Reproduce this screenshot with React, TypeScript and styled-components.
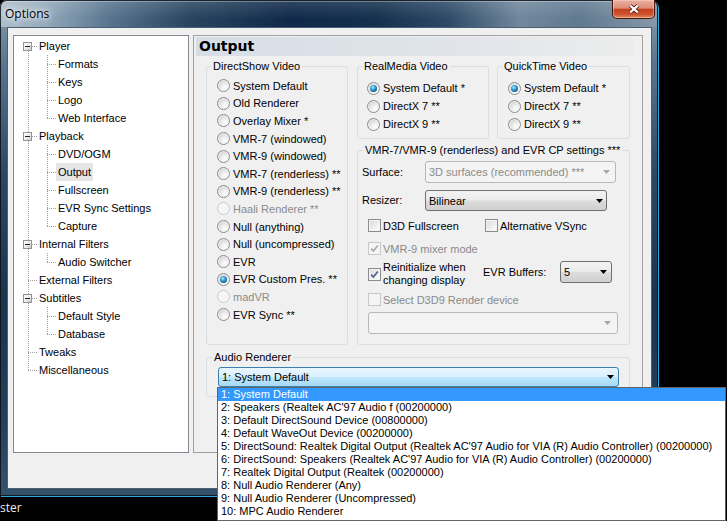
import React from 'react'
import type { FC, ReactNode } from 'react'
import styled, { createGlobalStyle, css } from 'styled-components'

const UI_FONT = `'Liberation Sans', Arial, sans-serif`

const GlobalStyle = createGlobalStyle`
  * { box-sizing: border-box; }
  html, body { margin: 0; padding: 0; background: #000; }
  body {
    width: 727px;
    height: 521px;
    overflow: hidden;
    font-family: ${UI_FONT};
    font-size: 11px;
    color: #000;
  }
  ul { list-style: none; margin: 0; padding: 0; }
`

/* ---------- desktop + window frame ---------- */

const Screen = styled.div`
  display: flex;
  flex-direction: column;
  width: 727px;
  height: 521px;
  overflow: hidden;
  background: #000;
`

const Window = styled.div`
  display: flex;
  flex-direction: column;
  flex: none;
  width: 658px;
  height: 496px;
  padding: 0 6px 7px 7px;
  border-radius: 7px 7px 0 0;
  background: linear-gradient(
    180deg,
    #8ea2b3 0%,
    #5c778f 12%,
    #2c4861 35%,
    #1b344d 60%,
    #243f58 85%,
    #35526b 100%
  );
  box-shadow: 1px 1px 0 #2ea7da, inset 0 0 0 1px rgba(8, 16, 26, 0.85);
`

const TitleBar = styled.div`
  display: flex;
  justify-content: space-between;
  align-items: flex-start;
  flex: none;
  height: 27px;
  margin: 0 -6px 0 -7px;
  padding: 0 3px 0 5px;
  border-radius: 7px 7px 0 0;
  background:
    linear-gradient(180deg, rgba(255, 255, 255, 0.14), rgba(255, 255, 255, 0) 70%),
    linear-gradient(
      90deg,
      #aebfcc 0%,
      #93a9ba 7%,
      #56728d 17%,
      #27455f 29%,
      #10294a 44%,
      #13304d 57%,
      #2c4a67 68%,
      #71879d 79%,
      #60798f 88%,
      #8799aa 100%
    );
  box-shadow: inset 0 1px 0 rgba(8, 16, 26, 0.85), inset 1px 0 0 rgba(8, 16, 26, 0.85),
    inset -1px 0 0 rgba(8, 16, 26, 0.85), inset 0 2px 0 rgba(255, 255, 255, 0.3);
`

const Title = styled.span`
  padding-top: 6px;
  font-family: 'Open Sans', 'Noto Sans', sans-serif;
  font-size: 12px;
  line-height: 16px;
  color: #000;
  text-shadow: 0 0 5px #fff, 0 0 9px rgba(255, 255, 255, 0.9), 0 0 14px rgba(255, 255, 255, 0.6);
`

const CloseButton = styled.div`
  display: flex;
  align-items: center;
  justify-content: center;
  width: 43px;
  height: 19px;
  border: 1px solid rgba(52, 12, 4, 0.9);
  border-top: 0;
  border-radius: 0 0 5px 5px;
  background: linear-gradient(180deg, #eab0a2 0%, #dd8d78 45%, #c5401f 52%, #cd5430 80%, #e28c63 100%);
  box-shadow: inset 0 0 0 1px rgba(255, 220, 200, 0.45);
`

const Client = styled.div`
  flex: 1;
  display: flex;
  align-items: flex-start;
  gap: 4px;
  padding: 7px 8px 0 5px;
  background: #f0f0f0;
  border: 1px solid #4c5f72;
`

const Taskbar = styled.div`
  flex: none;
  padding-top: 5px;
  font-family: 'Open Sans', 'Noto Sans', sans-serif;
  font-size: 12px;
  line-height: 14px;
  color: #ececec;
`

/* ---------- tree ---------- */

const TreeBox = styled.div`
  flex: none;
  width: 176px;
  height: 418px;
  padding-top: 1px;
  background: #fff;
  border: 1px solid #828790;
`

const Branch = styled.ul<{ $level: number }>`
  position: relative;
  &::before {
    content: '';
    position: absolute;
    left: ${(p) => 14 + p.$level * 19}px;
    top: ${(p) => (p.$level === 0 ? 9 : 0)}px;
    bottom: 9px;
    border-left: 1px dotted #a0a0a0;
  }
`

const TreeRow = styled.div<{ $level: number }>`
  position: relative;
  height: 18px;
  padding-left: ${(p) => 23 + p.$level * 19}px;
  &::before {
    content: '';
    position: absolute;
    left: ${(p) => 14 + p.$level * 19}px;
    top: 9px;
    width: 9px;
    border-top: 1px dotted #a0a0a0;
  }
`

const Expander = styled.span<{ $level: number }>`
  position: absolute;
  z-index: 1;
  left: ${(p) => 9 + p.$level * 19}px;
  top: 5px;
  width: 9px;
  height: 9px;
  border: 1px solid #939393;
  background: linear-gradient(135deg, #ffffff 0%, #ececec 55%, #c9c9c9 100%);
  &::after {
    content: '';
    position: absolute;
    left: 1px;
    top: 3px;
    width: 5px;
    height: 1px;
    background: #222;
  }
`

const TreeLabel = styled.span<{ $selected?: boolean }>`
  display: inline-block;
  position: relative;
  padding: 0 2px;
  line-height: 18px;
  white-space: nowrap;
  background: ${(p) => (p.$selected ? '#e6e6e6' : 'transparent')};
`

type TreeNode = { label: string; selected?: boolean; children?: TreeNode[] }

const TREE: TreeNode[] = [
  {
    label: 'Player',
    children: [{ label: 'Formats' }, { label: 'Keys' }, { label: 'Logo' }, { label: 'Web Interface' }],
  },
  {
    label: 'Playback',
    children: [
      { label: 'DVD/OGM' },
      { label: 'Output', selected: true },
      { label: 'Fullscreen' },
      { label: 'EVR Sync Settings' },
      { label: 'Capture' },
    ],
  },
  { label: 'Internal Filters', children: [{ label: 'Audio Switcher' }] },
  { label: 'External Filters' },
  { label: 'Subtitles', children: [{ label: 'Default Style' }, { label: 'Database' }] },
  { label: 'Tweaks' },
  { label: 'Miscellaneous' },
]

const TreeBranch: FC<{ nodes: TreeNode[]; level: number }> = ({ nodes, level }) => (
  <Branch $level={level}>
    {nodes.map((n) => (
      <li key={n.label}>
        <TreeRow $level={level}>
          {n.children && <Expander $level={level} />}
          <TreeLabel $selected={n.selected}>{n.label}</TreeLabel>
        </TreeRow>
        {n.children && <TreeBranch nodes={n.children} level={level + 1} />}
      </li>
    ))}
  </Branch>
)

/* ---------- page panel ---------- */

const Panel = styled.div`
  flex: none;
  width: 450px;
  height: 418px;
  border: 1px solid #a0a0a0;
  background: #f0f0f0;
`

const PageHeader = styled.h2`
  height: 19px;
  margin: 1px 8px 0 2px;
  padding-left: 3px;
  font-family: 'DejaVu Sans', Verdana, sans-serif;
  font-size: 14px;
  font-weight: bold;
  line-height: 19px;
  background: linear-gradient(90deg, #d6dde6 0%, #e1e5ea 60%, #ececec 100%);
`

const PageBody = styled.div`
  display: grid;
  grid-template-columns: 142px 273px;
  column-gap: 9px;
  row-gap: 6px;
  margin: 4px 0 0 12px;
`

const RightColumn = styled.div`
  display: flex;
  flex-direction: column;
  gap: 5px;
`

const GroupRow = styled.div`
  display: flex;
  gap: 8px;
`

const Group = styled.fieldset<{ $w: number; $h: number; $wide?: boolean }>`
  width: ${(p) => p.$w}px;
  height: ${(p) => p.$h}px;
  min-width: 0;
  margin: 0;
  padding: 0;
  border: 1px solid #d5dfe5;
  border-radius: 3px;
  ${(p) =>
    p.$wide &&
    css`
      grid-column: 1 / -1;
    `}
`

const Legend = styled.legend<{ $indent?: number }>`
  margin-left: ${(p) => p.$indent ?? 4}px;
  padding: 0 2px;
  font-size: 11px;
  line-height: 13px;
`

const OptionList = styled.ul<{ $pad: string }>`
  padding: ${(p) => p.$pad};
`

const Option = styled.li<{ $h: number; $disabled?: boolean; $w?: number }>`
  display: flex;
  align-items: center;
  gap: 3px;
  height: ${(p) => p.$h}px;
  white-space: nowrap;
  color: ${(p) => (p.$disabled ? '#8a8a8a' : '#000')};
  ${(p) =>
    p.$w &&
    css`
      width: ${p.$w}px;
    `}
`

const RadioDot = styled.span<{ $checked?: boolean; $disabled?: boolean }>`
  position: relative;
  flex: none;
  width: 13px;
  height: 13px;
  border-radius: 50%;
  border: 1px solid ${(p) => (p.$disabled ? '#c8c8c8' : '#8b8c8c')};
  background: ${(p) =>
    p.$disabled
      ? '#f4f4f4'
      : 'radial-gradient(circle at 65% 70%, #ffffff 0%, #eeeeee 35%, #d2d2d2 75%, #bebebe 100%)'};
  box-shadow: inset 0 0 0 1px rgba(255, 255, 255, 0.6);
  &::after {
    content: '';
    display: ${(p) => (p.$checked ? 'block' : 'none')};
    position: absolute;
    left: 2px;
    top: 2px;
    width: 7px;
    height: 7px;
    border-radius: 50%;
    background: radial-gradient(circle at 40% 35%, #b2e8fb 0%, #3ea3d8 35%, #10619a 70%, #0a3c66 100%);
  }
`

const CheckBox = styled.span<{ $disabled?: boolean }>`
  display: flex;
  align-items: center;
  justify-content: center;
  flex: none;
  width: 13px;
  height: 13px;
  border: 1px solid ${(p) => (p.$disabled ? '#c8c8c8' : '#8b8c8c')};
  background: ${(p) =>
    p.$disabled ? '#f4f4f4' : 'linear-gradient(135deg, #d8d9db 0%, #eeeeef 55%, #ffffff 100%)'};
  box-shadow: inset 0 0 0 1px ${(p) => (p.$disabled ? '#f4f4f4' : '#f4f4f4')};
`

const TwoLine = styled.span`
  line-height: 13px;
  white-space: nowrap;
`

const VmrBody = styled.div`
  display: flex;
  flex-direction: column;
  padding: 4px 0 0 4px;
`

const FieldRow = styled.div<{ $mt?: number; $ml?: number; $align?: string }>`
  display: flex;
  align-items: ${(p) => p.$align ?? 'center'};
  margin-top: ${(p) => p.$mt ?? 0}px;
  margin-left: ${(p) => p.$ml ?? 0}px;
`

const FieldLabel = styled.span<{ $w: number; $lh?: number }>`
  flex: none;
  width: ${(p) => p.$w}px;
  line-height: ${(p) => p.$lh ?? 13}px;
  white-space: nowrap;
`

type ComboVariant = 'normal' | 'disabled' | 'focused'

const comboLook = {
  normal: css`
    border: 1px solid #707070;
    background: linear-gradient(180deg, #f3f3f3 0%, #ebebeb 48%, #dddddd 52%, #cfcfcf 100%);
    color: #000;
  `,
  disabled: css`
    border: 1px solid #b5b9bc;
    background: #f4f4f4;
    color: #8a8a8a;
  `,
  focused: css`
    border: 1px solid #3c7fb1;
    background: linear-gradient(180deg, #eaf6fd 0%, #d9f0fc 48%, #bee6fd 52%, #a7d9f5 100%);
    color: #000;
  `,
}

const Combo = styled.div<{ $variant: ComboVariant; $w: number; $h: number; $pr?: number }>`
  position: relative;
  flex: none;
  display: flex;
  align-items: center;
  justify-content: space-between;
  width: ${(p) => p.$w}px;
  height: ${(p) => p.$h}px;
  padding: 0 ${(p) => p.$pr ?? 4}px 0 3px;
  border-radius: 3px;
  white-space: nowrap;
  ${(p) => comboLook[p.$variant]}
`

const AudioBody = styled.div`
  padding: 3px 0 0 11px;
`

const DropList = styled.ul`
  position: absolute;
  z-index: 20;
  top: calc(100% + 1px);
  left: -2px;
  width: 509px;
  height: 134px;
  background: #fff;
  border: 1px solid #646464;
`

const DropItem = styled.li<{ $active?: boolean }>`
  height: 13px;
  padding-left: 3px;
  line-height: 13px;
  white-space: nowrap;
  color: ${(p) => (p.$active ? '#fff' : '#000')};
  background: ${(p) => (p.$active ? '#3399ff' : 'transparent')};
`

/* ---------- small drawings ---------- */

const Arrow: FC<{ color?: string }> = ({ color = '#000' }) => (
  <svg width="7" height="4" viewBox="0 0 7 4">
    <path d="M0 0h7L3.5 4z" fill={color} />
  </svg>
)

const CheckMark: FC<{ color?: string }> = ({ color = '#4a5f8a' }) => (
  <svg width="9" height="9" viewBox="0 0 9 9">
    <path d="M1.2 4.6 L3.4 7 L7.8 1.6" fill="none" stroke={color} strokeWidth="1.6" />
  </svg>
)

const CloseGlyph: FC = () => (
  <svg width="12" height="10" viewBox="0 0 12 10">
    <path d="M2.2 1.6 L9.8 8.4 M9.8 1.6 L2.2 8.4" stroke="#4a1508" strokeWidth="3.8" />
    <path d="M2.2 1.6 L9.8 8.4 M9.8 1.6 L2.2 8.4" stroke="#fff" strokeWidth="2.1" />
  </svg>
)

/* ---------- data ---------- */

type RadioItem = { label: string; checked?: boolean; disabled?: boolean }

const DIRECTSHOW: RadioItem[] = [
  { label: 'System Default' },
  { label: 'Old Renderer' },
  { label: 'Overlay Mixer *' },
  { label: 'VMR-7 (windowed)' },
  { label: 'VMR-9 (windowed)' },
  { label: 'VMR-7 (renderless) **' },
  { label: 'VMR-9 (renderless) **' },
  { label: 'Haali Renderer **', disabled: true },
  { label: 'Null (anything)' },
  { label: 'Null (uncompressed)' },
  { label: 'EVR' },
  { label: 'EVR Custom Pres. **', checked: true },
  { label: 'madVR', disabled: true },
  { label: 'EVR Sync **' },
]

const SMALL_GROUP: RadioItem[] = [
  { label: 'System Default *', checked: true },
  { label: 'DirectX 7 **' },
  { label: 'DirectX 9 **' },
]

const AUDIO_DEVICES = [
  '1: System Default',
  "2: Speakers (Realtek AC'97 Audio f (00200000)",
  '3: Default DirectSound Device (00800000)',
  '4: Default WaveOut Device (00200000)',
  "5: DirectSound: Realtek Digital Output (Realtek AC'97 Audio for VIA (R) Audio Controller) (00200000)",
  "6: DirectSound: Speakers (Realtek AC'97 Audio for VIA (R) Audio Controller) (00200000)",
  '7: Realtek Digital Output (Realtek (00200000)',
  '8: Null Audio Renderer (Any)',
  '9: Null Audio Renderer (Uncompressed)',
  '10: MPC Audio Renderer',
]

const RadioGroup: FC<{ items: RadioItem[]; pad: string; rowH: number }> = ({ items, pad, rowH }) => (
  <OptionList $pad={pad}>
    {items.map((it) => (
      <Option key={it.label} $h={rowH} $disabled={it.disabled}>
        <RadioDot $checked={it.checked} $disabled={it.disabled} />
        {it.label}
      </Option>
    ))}
  </OptionList>
)

const Check: FC<{ checked?: boolean; disabled?: boolean; w?: number; children: ReactNode }> = ({
  checked,
  disabled,
  w,
  children,
}) => (
  <Option as="div" $h={14} $w={w} $disabled={disabled} style={{ height: 'auto', gap: 2 }}>
    <CheckBox $disabled={disabled}>{checked && <CheckMark color={disabled ? '#a8a8a8' : undefined} />}</CheckBox>
    {children}
  </Option>
)

/* ---------- app ---------- */

const App: FC = () => (
  <Screen>
    <GlobalStyle />
    <Window>
      <TitleBar>
        <Title>Options</Title>
        <CloseButton>
          <CloseGlyph />
        </CloseButton>
      </TitleBar>
      <Client>
        <TreeBox>
          <TreeBranch nodes={TREE} level={0} />
        </TreeBox>
        <Panel>
          <PageHeader>Output</PageHeader>
          <PageBody>
            <Group $w={142} $h={285}>
              <Legend>DirectShow Video</Legend>
              <RadioGroup items={DIRECTSHOW} pad="4px 0 0 10px" rowH={17.6} />
            </Group>
            <RightColumn>
              <GroupRow>
                <Group $w={132} $h={79}>
                  <Legend>RealMedia Video</Legend>
                  <RadioGroup items={SMALL_GROUP} pad="6px 0 0 9px" rowH={18} />
                </Group>
                <Group $w={133} $h={79}>
                  <Legend>QuickTime Video</Legend>
                  <RadioGroup items={SMALL_GROUP} pad="6px 0 0 10px" rowH={18} />
                </Group>
              </GroupRow>
              <Group $w={273} $h={201}>
                <Legend $indent={5}>VMR-7/VMR-9 (renderless) and EVR CP settings ***</Legend>
                <VmrBody>
                  <FieldRow>
                    <FieldLabel $w={63}>Surface:</FieldLabel>
                    <Combo $variant="disabled" $w={191} $h={22} $pr={5}>
                      3D surfaces (recommended) ***
                      <Arrow color="#a8a8a8" />
                    </Combo>
                  </FieldRow>
                  <FieldRow $mt={7}>
                    <FieldLabel $w={63}>Resizer:</FieldLabel>
                    <Combo $variant="normal" $w={182} $h={21} $pr={3}>
                      Bilinear
                      <Arrow />
                    </Combo>
                  </FieldRow>
                  <FieldRow $mt={8} $ml={6}>
                    <Check w={117}>D3D Fullscreen</Check>
                    <Check>Alternative VSync</Check>
                  </FieldRow>
                  <FieldRow $mt={10} $ml={6}>
                    <Check checked disabled>
                      VMR-9 mixer mode
                    </Check>
                  </FieldRow>
                  <FieldRow $mt={6} $ml={6} $align="flex-start">
                    <Check checked w={115}>
                      <TwoLine>
                        Reinitialize when
                        <br />
                        changing display
                      </TwoLine>
                    </Check>
                    <FieldLabel $w={77} $lh={22}>
                      EVR Buffers:
                    </FieldLabel>
                    <Combo $variant="normal" $w={52} $h={22} $pr={4}>
                      5
                      <Arrow />
                    </Combo>
                  </FieldRow>
                  <FieldRow $mt={6} $ml={6}>
                    <Check disabled>Select D3D9 Render device</Check>
                  </FieldRow>
                  <FieldRow $mt={6} $ml={6}>
                    <Combo $variant="disabled" $w={250} $h={22} $pr={6}>
                      <span />
                      <Arrow color="#a8a8a8" />
                    </Combo>
                  </FieldRow>
                </VmrBody>
              </Group>
            </RightColumn>
            <Group $w={424} $h={46} $wide>
              <Legend $indent={5}>Audio Renderer</Legend>
              <AudioBody>
                <Combo $variant="focused" $w={401} $h={20} $pr={4}>
                  1: System Default
                  <Arrow />
                  <DropList>
                    {AUDIO_DEVICES.map((d, i) => (
                      <DropItem key={d} $active={i === 0}>
                        {d}
                      </DropItem>
                    ))}
                  </DropList>
                </Combo>
              </AudioBody>
            </Group>
          </PageBody>
        </Panel>
      </Client>
    </Window>
    <Taskbar>ster</Taskbar>
  </Screen>
)

export default App
